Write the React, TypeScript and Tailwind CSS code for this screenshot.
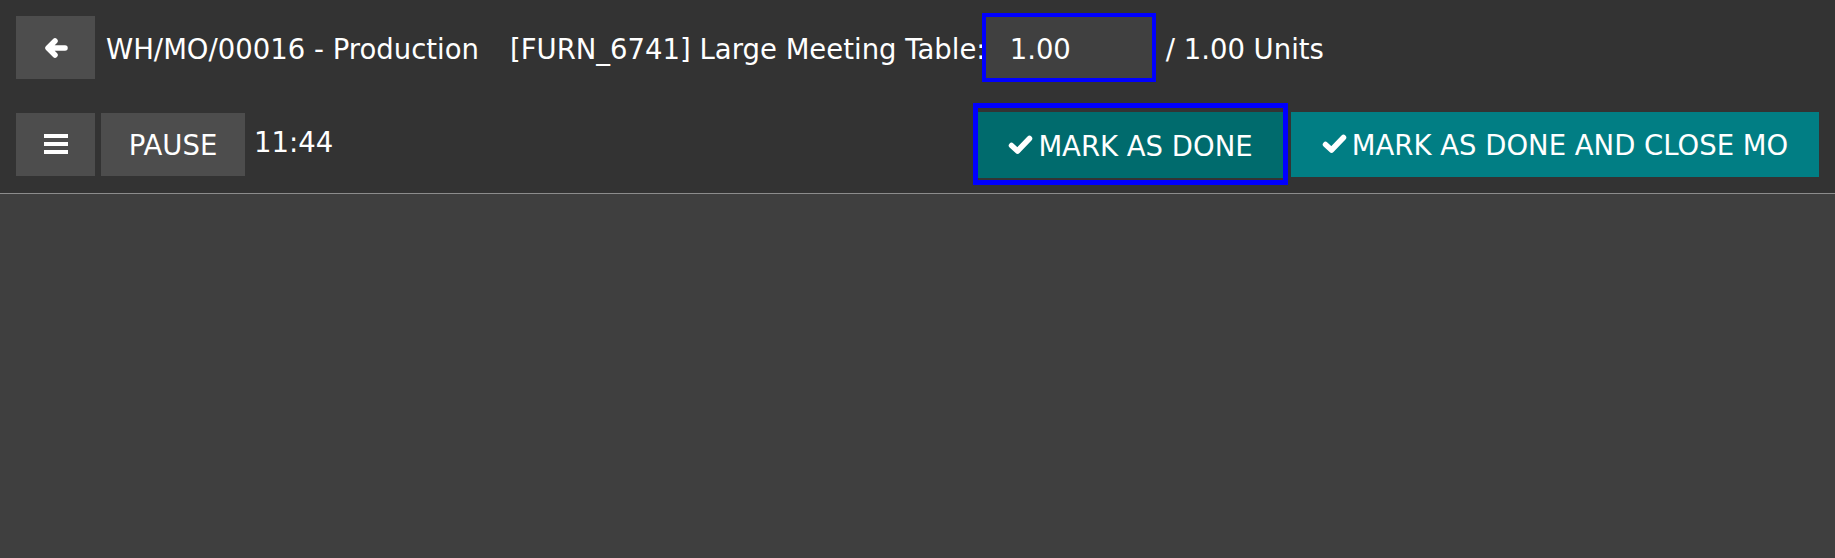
const ArrowLeft = () => (
  <svg width="24" height="20" viewBox="0 0 24 20" fill="none">
    <path d="M11 3 L4 10 L11 17 M4.5 10 H21" stroke="white" strokeWidth="5.5" strokeLinecap="round" strokeLinejoin="round" />
  </svg>
);

const Bars = () => (
  <svg width="24" height="20" viewBox="0 0 24 20" fill="white">
    <rect x="0" y="0" width="24" height="4" />
    <rect x="0" y="8" width="24" height="4" />
    <rect x="0" y="16" width="24" height="4" />
  </svg>
);

const Check = () => (
  <svg width="25" height="20" viewBox="0 0 25 20" fill="none">
    <path d="M3.5 10.5 L9.5 16 L21.5 3.5" stroke="white" strokeWidth="5.5" strokeLinecap="round" strokeLinejoin="round" />
  </svg>
);

export default function App() {
  return (
    <div className="min-h-[558px] w-full bg-[#3f3f3f] text-white" style={{ fontFamily: '"DejaVu Sans", sans-serif' }}>
      <div className="flex flex-col gap-[21px] border-b border-[#8c8c8c] bg-[#333333] pt-[13px] pb-[8px] pl-[16px] pr-[16px]">
        {/* row 1 */}
        <div className="flex h-[69px] items-center text-[27.5px]">
          <button className="flex h-[63px] w-[79px] items-center justify-center bg-[#4d4d4d]">
            <ArrowLeft />
          </button>
          <span className="ml-[11px] whitespace-nowrap pt-[4px]">WH/MO/00016 - Production</span>
          <span className="ml-[31px] whitespace-nowrap pt-[4px]">[FURN_6741] Large Meeting Table:</span>
          <div className="-ml-[4px] flex h-[69px] w-[174px] items-center border-[4px] border-[#0000ff] bg-[#404040] pl-[24px] pt-[4px]">
            1.00
          </div>
          <span className="ml-[10px] whitespace-nowrap pt-[4px]">/ 1.00 Units</span>
        </div>

        {/* row 2 */}
        <div className="flex h-[82px] items-center">
          <div className="flex items-center gap-[6px] text-[27.5px]">
            <button className="flex h-[63px] w-[79px] items-center justify-center bg-[#4d4d4d]">
              <Bars />
            </button>
            <button className="flex h-[63px] w-[144px] items-center justify-center bg-[#4d4d4d] pt-[4px]">PAUSE</button>
            <span className="mb-[3px] ml-[3px]">11:44</span>
          </div>
          <div className="ml-auto flex items-center gap-[3px] text-[27.5px]">
            <div className="flex h-[82px] w-[315px] flex-col border-[5px] border-[#0000ff] pt-[4px] pb-[2px]">
              <button className="flex flex-1 items-center justify-center gap-[5px] bg-[#006b6d]">
                <Check />
                <span className="pt-[4px]">MARK AS DONE</span>
              </button>
            </div>
            <button className="flex h-[65px] w-[528px] items-center justify-center gap-[5px] bg-[#017e84]">
              <Check />
              <span className="pt-[4px]">MARK AS DONE AND CLOSE MO</span>
            </button>
          </div>
        </div>
      </div>
    </div>
  );
}
